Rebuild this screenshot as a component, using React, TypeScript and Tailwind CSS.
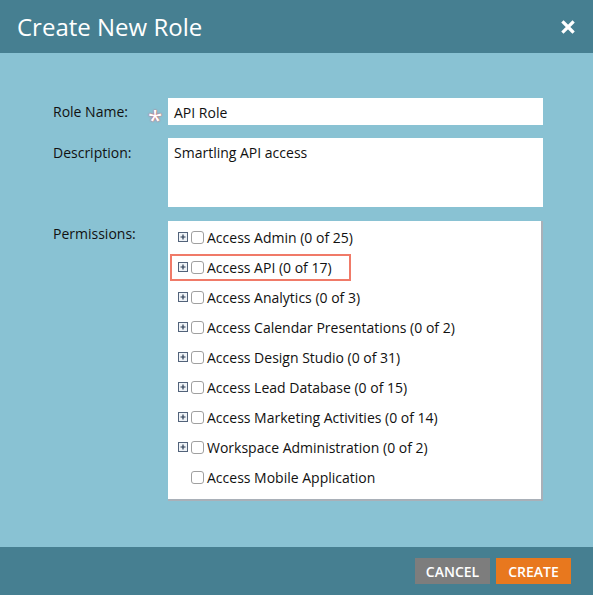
const perms = [
  { label: "Access Admin (0 of 25)", expand: true },
  { label: "Access API (0 of 17)", expand: true, highlight: true },
  { label: "Access Analytics (0 of 3)", expand: true },
  { label: "Access Calendar Presentations (0 of 2)", expand: true },
  { label: "Access Design Studio (0 of 31)", expand: true },
  { label: "Access Lead Database (0 of 15)", expand: true },
  { label: "Access Marketing Activities (0 of 14)", expand: true },
  { label: "Workspace Administration (0 of 2)", expand: true },
  { label: "Access Mobile Application", expand: false },
];

function PlusBox() {
  return (
    <svg width="10" height="10" viewBox="0 0 10 10" className="shrink-0">
      <rect x="0.5" y="0.5" width="9" height="9" fill="#eef2f6" stroke="#52627a" />
      <path d="M2.5 5h5M5 2.5v5" stroke="#2a3a52" strokeWidth="1.2" />
    </svg>
  );
}

export default function App() {
  return (
    <div
      className="flex h-[595px] w-[593px] flex-col bg-[#89c2d3] text-[14px] text-[#111]"
      style={{ fontFamily: '"Open Sans", sans-serif' }}
    >
      {/* header */}
      <div className="flex h-[53px] items-center justify-between bg-[#467f91] pl-[17px] pr-[18px]">
        <h1 className="text-[24px] leading-none text-white">Create New Role</h1>
        <svg width="14" height="14" viewBox="0 0 14 14">
          <path d="M2.5 2.5l9 9M11.5 2.5l-9 9" stroke="#fff" strokeWidth="3.2" strokeLinecap="square" />
        </svg>
      </div>

      {/* body */}
      <div className="flex flex-1 flex-col gap-[13px] pl-[53px] pr-[50px] pt-[45px]">
        <div className="flex h-[27px] items-center">
          <span className="w-[95px] pb-[1px]">Role Name:</span>
          <span className="flex h-[27px] w-[20px] items-center overflow-visible pt-[15px] text-[26px] leading-[0] text-white [text-shadow:0_0_2px_#d06070,0_0_1px_#d06070]">*</span>
          <div className="flex h-[27px] flex-1 items-center bg-white px-[6px] pt-[1px]">API Role</div>
        </div>
        <div className="flex items-start">
          <span className="w-[115px] pt-[4px]">Description:</span>
          <div className="h-[69px] flex-1 bg-white px-[6px] pt-[4px]">Smartling API access</div>
        </div>
        <div className="mt-[1px] flex items-start">
          <span className="w-[115px] pt-[2px]">Permissions:</span>
          <div className="flex h-[280px] flex-1 flex-col border-r-2 border-b-2 border-[#a9b0b8] bg-white pl-[10px] pt-[1px]">
            {perms.map((p) => (
              <div key={p.label} className="flex h-[30px] items-center">
                <div
                  className={
                    p.highlight
                      ? "-ml-[8px] flex h-[27px] items-center border-2 border-[#f07a68] pl-[6px] pr-[17px]"
                      : "flex items-center"
                  }
                >
                  {p.expand ? <PlusBox /> : <span className="w-[10px]" />}
                  <span className="ml-[3px] mr-[3px] h-[13px] w-[13px] rounded-[3px] border border-[#a0a0a0] bg-white" />
                  <span>{p.label}</span>
                </div>
              </div>
            ))}
          </div>
        </div>
      </div>

      {/* footer */}
      <div className="flex h-[48px] items-center justify-end gap-[6px] bg-[#467f91] pr-[22px]">
        <button className="h-[26px] w-[75px] bg-[#7d7d7d] text-[14px] font-semibold text-white">CANCEL</button>
        <button className="h-[26px] w-[75px] bg-[#e8781e] text-[14px] font-semibold text-white">CREATE</button>
      </div>
    </div>
  );
}
